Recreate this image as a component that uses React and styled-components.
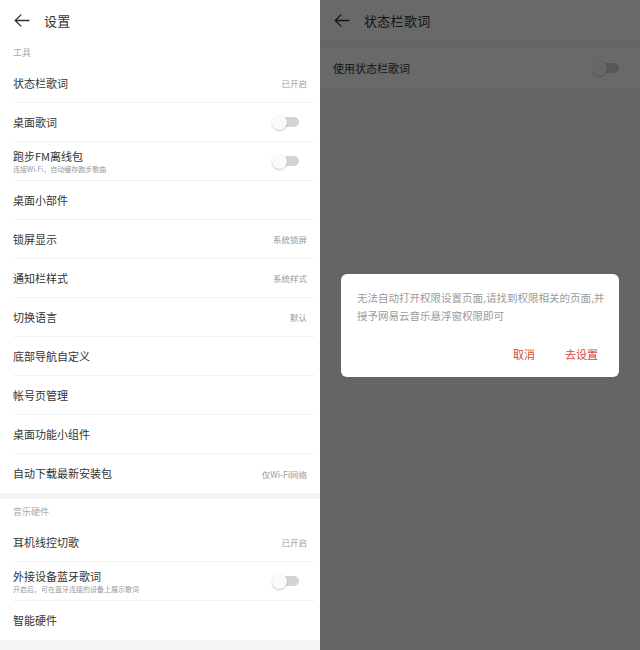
import React from 'react';
import styled, { createGlobalStyle } from 'styled-components';

const GlobalStyle = createGlobalStyle`
  html, body { margin: 0; padding: 0; }
  body {
    font-family: "Noto Sans CJK SC", "Noto Sans", sans-serif;
    background: #ffffff;
  }
`;

const tools = [
  { title: '状态栏歌词', value: '已开启' },
  { title: '桌面歌词', toggle: true },
  { title: '跑步FM离线包', sub: '连接Wi-Fi，自动缓存跑步歌曲', toggle: true },
  { title: '桌面小部件' },
  { title: '锁屏显示', value: '系统锁屏' },
  { title: '通知栏样式', value: '系统样式' },
  { title: '切换语言', value: '默认' },
  { title: '底部导航自定义' },
  { title: '帐号页管理' },
  { title: '桌面功能小组件' },
  { title: '自动下载最新安装包', value: '仅Wi-Fi网络', last: true },
];

const hardware = [
  { title: '耳机线控切歌', value: '已开启' },
  { title: '外接设备蓝牙歌词', sub: '开启后，可在蓝牙连接的设备上展示歌词', toggle: true },
  { title: '智能硬件', last: true },
];

function BackArrow() {
  return (
    <svg width="16" height="13" viewBox="0 0 16 13" fill="none">
      <path d="M15.5 6.5H1.2M7.2 0.6L1.2 6.5l6 5.9" stroke="#333" strokeWidth="1.3" />
    </svg>
  );
}

function SettingRow({ item }) {
  return (
    <Row $last={item.last}>
      <RowText>
        <RowTitle>{item.title}</RowTitle>
        {item.sub && <RowSub>{item.sub}</RowSub>}
      </RowText>
      {item.value && <RowValue>{item.value}</RowValue>}
      {item.toggle && <Toggle />}
    </Row>
  );
}

export default function App() {
  return (
    <>
      <GlobalStyle />
      <Screen>
        <Panel>
          <Header>
            <BackArrow />
            <HeaderTitle>设置</HeaderTitle>
          </Header>
          <Section>
            <SectionLabel>工具</SectionLabel>
            {tools.map(item => <SettingRow key={item.title} item={item} />)}
          </Section>
          <Gap />
          <Section>
            <SectionLabel>音乐硬件</SectionLabel>
            {hardware.map(item => <SettingRow key={item.title} item={item} />)}
          </Section>
          <Gap $tall />
        </Panel>

        <Panel $gray>
          <Header>
            <BackArrow />
            <HeaderTitle>状态栏歌词</HeaderTitle>
          </Header>
          <Gap $thin />
          <Section>
            <Row $last $tall>
              <RowText>
                <RowTitle>使用状态栏歌词</RowTitle>
              </RowText>
              <Toggle />
            </Row>
          </Section>
          <Dim>
            <Dialog>
              <DialogText>无法自动打开权限设置页面,请找到权限相关的页面,并授予网易云音乐悬浮窗权限即可</DialogText>
              <DialogActions>
                <DialogButton>取消</DialogButton>
                <DialogButton>去设置</DialogButton>
              </DialogActions>
            </Dialog>
          </Dim>
        </Panel>
      </Screen>
    </>
  );
}

const Screen = styled.div`
  display: flex;
  width: 640px;
  height: 650px;
  overflow: hidden;
`;

const Panel = styled.div`
  position: relative;
  width: 320px;
  height: 650px;
  display: flex;
  flex-direction: column;
  background: ${p => (p.$gray ? '#f4f4f4' : '#ffffff')};
  overflow: hidden;
`;

const Header = styled.div`
  height: 40px;
  flex: none;
  display: flex;
  align-items: center;
  padding-left: 14px;
  background: #fff;
`;

const HeaderTitle = styled.div`
  margin-left: 14px;
  font-size: 13px;
  color: #333;
  letter-spacing: 0.3px;
`;

const Section = styled.div`
  background: #fff;
  flex: none;
`;

const SectionLabel = styled.div`
  height: 24px;
  padding: 0 13px;
  display: flex;
  align-items: center;
  font-size: 9px;
  color: #aaa;
`;

const Row = styled.div`
  height: ${p => (p.$tall ? '40px' : '39px')};
  box-sizing: border-box;
  margin-left: 13px;
  margin-right: 5px;
  padding-right: 8px;
  display: flex;
  align-items: center;
  border-bottom: ${p => (p.$last ? 'none' : '1px solid #f3f3f3')};
`;

const RowText = styled.div`
  flex: 1;
  display: flex;
  flex-direction: column;
  justify-content: center;
  min-width: 0;
`;

const RowTitle = styled.div`
  font-size: 11px;
  line-height: 15px;
  color: #333;
`;

const RowSub = styled.div`
  font-size: 7px;
  line-height: 10px;
  color: #999;
  white-space: nowrap;
`;

const RowValue = styled.div`
  font-size: 8.5px;
  color: #999;
`;

const Toggle = styled.div`
  position: relative;
  width: 21px;
  height: 10px;
  margin-right: 8px;
  border-radius: 5px;
  background: #d4d4d4;
  &::before {
    content: '';
    position: absolute;
    left: -6px;
    top: -2.5px;
    width: 15px;
    height: 15px;
    border-radius: 50%;
    background: #fafafa;
    box-shadow: 0 1px 2px rgba(0, 0, 0, 0.22);
  }
`;

const Gap = styled.div`
  flex: none;
  height: ${p => (p.$tall ? '11px' : p.$thin ? '8px' : '6px')};
  background: #f4f4f4;
`;

const Dim = styled.div`
  position: absolute;
  inset: 0;
  background: rgba(0, 0, 0, 0.59);
  display: flex;
  align-items: center;
  justify-content: center;
`;

const Dialog = styled.div`
  width: 278px;
  box-sizing: border-box;
  background: #fff;
  border-radius: 6px;
  padding: 15px 8px 12px 16px;
`;

const DialogText = styled.div`
  font-size: 10.5px;
  line-height: 18px;
  color: #9a9a9a;
`;

const DialogActions = styled.div`
  display: flex;
  justify-content: flex-end;
  gap: 30px;
  margin-top: 18px;
  margin-right: 13px;
  height: 22px;
  align-items: center;
`;

const DialogButton = styled.div`
  font-size: 11px;
  color: #d4483f;
`;
